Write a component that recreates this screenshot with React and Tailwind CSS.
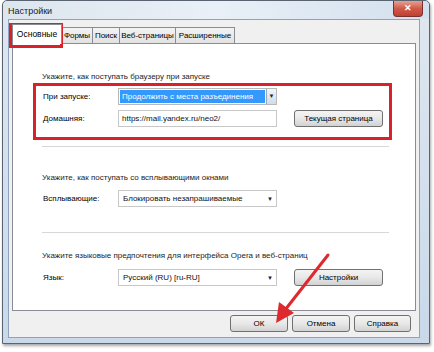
import React from 'react';

const btn =
  "h-[17px] flex items-center justify-center rounded-[3px] border border-[#707070] bg-gradient-to-b from-[#f4f4f4] via-[#e8e8e8] to-[#d2d2d2] text-[8px] text-black whitespace-nowrap";

const tab =
  "h-[16px] border border-l-0 border-b-0 border-[#898c95] bg-gradient-to-b from-[#f3f3f3] to-[#e2e2e2] flex items-center justify-center whitespace-nowrap";

function Select({ value }) {
  return (
    <div className="w-[159px] h-[17px] border border-[#c8c8c8] bg-white flex items-center pl-[4px] pr-[3px]">
      <span className="flex-1 text-[8px] text-[#111] truncate">{value}</span>
      <span className="text-[6px] text-[#222] leading-none">▼</span>
    </div>
  );
}

export default function App() {
  return (
    <div className="relative w-[434px] h-[352px] bg-white overflow-hidden font-['Liberation_Sans',Arial,sans-serif]">
      <div className="ml-[2px] w-[428px] h-[344px] rounded-t-[5px] border border-[#5a6470] bg-gradient-to-b from-[#dfe7f0] to-[#c9d9ea] flex flex-col shadow-[1px_2px_3px_rgba(0,0,0,0.35)]">
        {/* title bar */}
        <div className="h-[18px] flex items-start justify-between bg-gradient-to-r from-[#dde5ee] via-[#e9f0f7] to-[#d3e0ee] rounded-t-[5px]">
          <span className="mt-[4px] ml-[5px] text-[9px] text-[#1a1a1a]">Настройки</span>
          <div className="mr-[6px] w-[30px] h-[16px] rounded-b-[4px] border border-t-0 border-[#7a3030] bg-gradient-to-b from-[#e8a090] via-[#cf5a4a] to-[#c04030] flex items-center justify-center text-white text-[9px] font-bold leading-none">
            ✕
          </div>
        </div>

        <div className="flex flex-1">
          <div className="w-[5px]" />
          {/* client */}
          <div className="w-[412px] h-[319px] bg-[#f0f0f0] border border-[#8da2bd] flex flex-col pl-[3px] pr-[3px]">
            {/* tabs */}
            <div className="mt-[3px] h-[20px] flex items-end text-[8px] text-black">
              <div className="h-[20px] w-[50px] bg-white border border-b-0 border-[#898c95] flex items-center justify-center relative z-10 -mb-[1px] text-[8.5px]">
                Основные
              </div>
              <div className={tab + " w-[31px]"}>Формы</div>
              <div className={tab + " w-[27px]"}>Поиск</div>
              <div className={tab + " w-[56px]"}>Веб-страницы</div>
              <div className={tab + " w-[59px]"}>Расширенные</div>
            </div>

            {/* panel */}
            <div className="w-[404px] h-[268px] bg-white border border-[#898c95] pl-[29px] flex flex-col text-[8px] text-black">
              <div className="mt-[27px] h-[12px] leading-[12px] text-[#1e1e1e]">Укажите, как поступать браузеру при запуске</div>

              <div className="mt-[5px] flex items-center h-[17px]">
                <span className="w-[76px] pl-[1px]">При запуске:</span>
                <div className="w-[159px] h-[17px] border border-[#b8b8b8] bg-white flex items-stretch">
                  <div className="flex-1 m-[1px] bg-[#3399ff] text-white flex items-center pl-[2px]">
                    Продолжить с места разъединения
                  </div>
                  <div className="w-[10px] border-l border-[#9aa8ba] bg-gradient-to-b from-[#f2f6fb] to-[#cfdceb] flex items-center justify-center text-[6px] text-[#222]">
                    ▼
                  </div>
                </div>
              </div>

              <div className="mt-[5px] flex items-center h-[17px]">
                <span className="w-[76px] pl-[1px]">Домашняя:</span>
                <div className="w-[159px] h-[17px] border border-[#c8c8c8] bg-white flex items-center pl-[3px] text-[#111]">
                  https://mail.yandex.ru/neo2/
                </div>
                <div className={btn + " ml-[17px] w-[89px] h-[15px]"}>Текущая страница</div>
              </div>

              <div className="mt-[19px] w-[347px] h-px bg-[#d8d8d8]" />

              <div className="mt-[25px] h-[12px] leading-[12px] text-[#1e1e1e]">Укажите, как поступать со всплывающими окнами</div>
              <div className="mt-[6px] flex items-center h-[17px]">
                <span className="w-[76px] pl-[1px]">Всплывающие:</span>
                <Select value="Блокировать незапрашиваемые" />
              </div>

              <div className="mt-[25px] w-[347px] h-px bg-[#d8d8d8]" />

              <div className="mt-[17px] h-[12px] leading-[12px] text-[#1e1e1e]">Укажите языковые предпочтения для интерфейса Opera и веб-страниц</div>
              <div className="mt-[7px] flex items-center h-[17px]">
                <span className="w-[76px] pl-[1px]">Язык:</span>
                <Select value="Русский (RU) [ru-RU]" />
                <div className={btn + " ml-[17px] w-[89px] h-[15px]"}>Настройки</div>
              </div>
            </div>

            {/* bottom buttons */}
            <div className="mt-[4px] flex justify-end gap-[4px] pr-[5px]">
              <div className={btn + " w-[58px] border-[#3c7fb1] from-[#eaf6fd] via-[#d9f0fc] to-[#bee6fd]"}>ОК</div>
              <div className={btn + " w-[58px]"}>Отмена</div>
              <div className={btn + " w-[57px]"}>Справка</div>
            </div>
          </div>
          <div className="w-[8px]" />
        </div>
      </div>

      {/* annotations */}
      <div className="absolute left-[9px] top-[23px] w-[54px] h-[25px] border-[3px] border-[#d9212b]" />
      <div className="absolute left-[33px] top-[83px] w-[359px] h-[57px] border-[3px] border-[#d9212b]" />
      <svg className="absolute left-0 top-0" width="434" height="352" viewBox="0 0 434 352">
        <line x1="328" y1="255" x2="285" y2="310" stroke="#dd2a2e" strokeWidth="3" strokeLinecap="round" />
        <polygon points="276,323 279,302 294,313" fill="#dd2a2e" />
      </svg>
    </div>
  );
}
